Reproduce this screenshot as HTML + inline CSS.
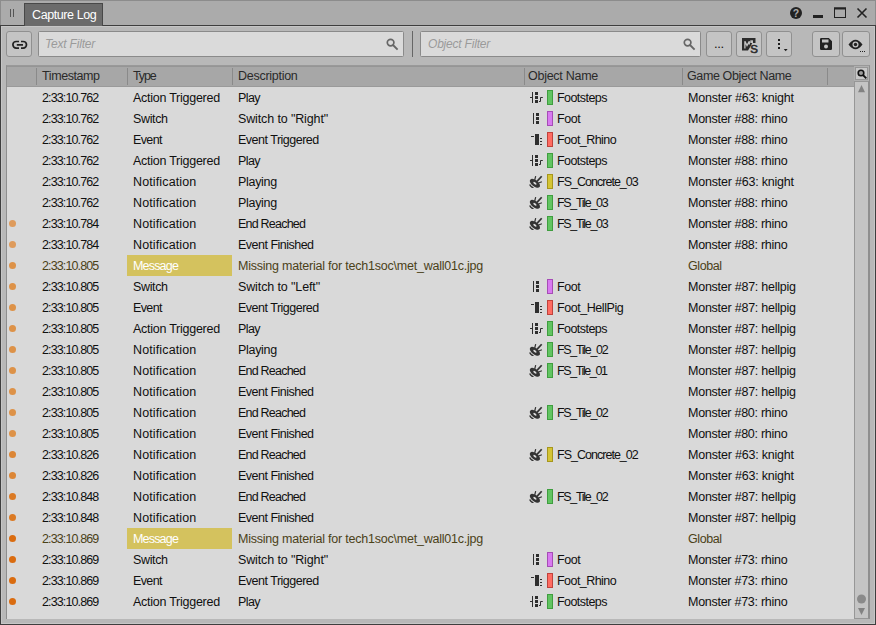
<!DOCTYPE html>
<html lang="en">
<head>
<meta charset="utf-8">
<title>Capture Log</title>
<style>
*{box-sizing:border-box;margin:0;padding:0}
html,body{width:876px;height:625px;overflow:hidden}
body{position:relative;background:#b8b8b8;font-family:"Liberation Sans",sans-serif;font-size:12.5px;color:#101010}
.abs{position:absolute}
#title{position:absolute;left:0;top:0;width:876px;height:25px;background:#ababab;border:1px solid #8c8c8c;border-bottom:none}
#frame{position:absolute;left:0;top:25px;width:876px;height:600px;border:1px solid #3e3e3e;box-shadow:inset 1px 1px 0 #c6c6c6,inset -1px -1px 0 #c6c6c6;pointer-events:none;z-index:10}
#tab{position:absolute;left:24px;top:3px;width:79px;height:23px;z-index:11;background:#6b6b6b;border:1px solid #484848;border-bottom:none;color:#fff;font-size:12.5px;letter-spacing:-0.4px;line-height:22px;padding-left:7px;white-space:nowrap}
#grip{position:absolute;left:10px;top:9px;width:4px;height:8px;border-left:1px solid #555;border-right:1px solid #555}
.btn{position:absolute;top:31px;height:26px;background:#c4c4c4;border:1px solid #909090;border-radius:3px}
.inp{position:absolute;top:31px;height:26px;background:#dadada;border:1px solid #8a8a8a;border-radius:1.500px;font-style:italic;color:#9a9a9a;font-size:12px;letter-spacing:-0.2px;line-height:25px;padding-left:6px}
#sep{position:absolute;left:412px;top:31px;width:1px;height:26px;background:#666}
#list{position:absolute;left:6px;top:65px;width:864px;height:554px;background:#d9d9d9;border:1px solid #8e8e8e;border-top-color:#999;border-bottom:none}
#hdr{position:absolute;left:0;top:0;width:847px;height:21px;background:#a7a7a7;border-top:1px solid #959595;border-bottom:1px solid #9a9a9a}
#hdr span{position:absolute;top:0;line-height:19px;color:#2a2a2a;white-space:nowrap}
#hdr i{position:absolute;top:1px;width:1px;height:17px;background:#8a8a8a}
#rows{position:absolute;left:0;top:21px;width:847px}
.row{position:relative;height:21px;width:847px}
.c{position:absolute;top:1px;line-height:21px;white-space:nowrap}
.ts{left:35px}.ty{left:126px}.de{left:231px}.on{left:550px}.go{left:681px}
.msg{color:#4b4118}
.msg .ty{left:120px;top:0;width:105px;height:21px;padding-left:6px;padding-top:1px;background:#d4c25e;color:#fff}
.ic{position:absolute;left:522px;top:3px}
.sw{position:absolute;left:540px;top:3px;width:6px;height:15px;border:1px solid}
.sw.g{background:#62c462;border-color:#3f9e3f}
.sw.p{background:#d87af0;border-color:#a64cb6}
.sw.r{background:#ff6c62;border-color:#c0423c}
.sw.y{background:#d4c435;border-color:#a6961c}
.dot{position:absolute;left:2px;top:7px;width:7px;height:7px;border-radius:50%}
.d1{background:#de9b5c}.d2{background:#dd9248}.d3{background:#dc8636}.d4{background:#db7a24}.d5{background:#da6c10}
#sb{position:absolute;left:847px;top:15px;width:15px;height:538px;background:#c4c4c4;border:1px solid #979797;border-right-color:#8e8e8e}
#sbtop{position:absolute;left:847px;top:0;width:15px;height:15px;background:#b0b0b0}
#find{position:absolute;left:848px;top:1px;width:13px;height:13px;background:#c8c8c8;border:1px solid #979797}
</style>
</head>
<body>
<svg width="0" height="0" style="position:absolute">
<defs>
<g id="i-sw" fill="#2e2e2e" stroke="none">
 <rect x="1" y="7" width="2" height="1"/><rect x="3" y="2" width="1" height="11"/>
 <rect x="6" y="2" width="3" height="3"/><rect x="6" y="6" width="3" height="3"/><rect x="6" y="10" width="3" height="3"/>
 <path d="M10 11.500h1.500v-4h2.300" fill="none" stroke="#2e2e2e" stroke-width="1"/>
</g>
<g id="i-sg" fill="#2e2e2e">
 <rect x="4" y="2" width="1" height="11"/>
 <rect x="7" y="2" width="3" height="3"/><rect x="7" y="6" width="3" height="3"/><rect x="7" y="10" width="3" height="3"/>
</g>
<g id="i-ev" fill="#2e2e2e">
 <rect x="2" y="4" width="3" height="1"/><rect x="6" y="2" width="4" height="11"/>
 <rect x="11" y="6" width="2" height="1"/><rect x="11" y="9" width="2" height="1"/><rect x="11" y="12" width="2" height="1"/>
</g>
<g id="i-sfx">
 <ellipse cx="5.900" cy="9.300" rx="5.900" ry="3.200" transform="rotate(38 5.900 9.300)" fill="#333"/>
 <ellipse cx="5.900" cy="9.300" rx="1.900" ry="0.900" transform="rotate(38 5.900 9.300)" fill="#dcdcdc"/>
 <path d="M0.700 10.600Q1.600 13 4.500 13.900" stroke="#333" stroke-width="1.400" fill="none"/>
 <path d="M8 7.400L12.700 2.200" stroke="#333" stroke-width="1.700" fill="none"/>
 <path d="M5.700 6L6.700 2.200M9.500 9L12.900 7.700" stroke="#333" stroke-width="1.200" fill="none"/>
</g>
</defs>
</svg>

<div id="title"></div>
<div id="grip"></div>
<div id="tab">Capture Log</div>

<!-- window buttons -->
<svg class="abs" style="left:788px;top:4px" width="84" height="18" viewBox="0 0 84 18">
 <circle cx="8" cy="9" r="6" fill="#222"/>
 <text x="8" y="13" text-anchor="middle" font-family="Liberation Sans" font-weight="bold" font-size="10.5" fill="#ababab">?</text>
 <rect x="25" y="11" width="10" height="3" fill="#222"/>
 <rect x="46.5" y="4" width="11" height="9.5" fill="none" stroke="#222" stroke-width="1"/><rect x="46" y="3.5" width="12" height="2" fill="#222"/>
 <path d="M69.5 4.5L78.5 13.5M78.5 4.5L69.5 13.5" stroke="#222" stroke-width="1.6" fill="none"/>
</svg>

<!-- toolbar -->
<div class="btn" style="left:6px;width:26px">
 <svg class="abs" style="left:5px;top:6px" width="16" height="14" viewBox="0 0 16 14"><path d="M7 3.5H4.2a3.3 3.3 0 0 0 0 6.6H7M9 3.5h2.2a3.3 3.3 0 0 1 0 6.6H9M4.800 6.800h6.200" fill="none" stroke="#222" stroke-width="1.7"/></svg>
</div>
<div class="inp" style="left:38px;width:366px">Text Filter
 <svg class="abs" style="right:4.5px;top:5.500px" width="13" height="13" viewBox="0 0 13 13"><circle cx="4.6" cy="4.6" r="3.3" fill="none" stroke="#666" stroke-width="1.7"/><path d="M7 7l4.6 4.6" stroke="#666" stroke-width="1.9"/></svg>
</div>
<div id="sep"></div>
<div class="inp" style="left:420px;width:281px;padding-left:7px">Object Filter
 <svg class="abs" style="right:4.5px;top:5.500px" width="13" height="13" viewBox="0 0 13 13"><circle cx="4.6" cy="4.6" r="3.3" fill="none" stroke="#666" stroke-width="1.7"/><path d="M7 7l4.6 4.6" stroke="#666" stroke-width="1.9"/></svg>
</div>
<div class="btn" style="left:706px;width:26px"><span class="abs" style="left:7px;top:5px;font-size:13px;line-height:14px;color:#111;letter-spacing:-0.4px">...</span></div>
<div class="btn" style="left:736px;width:26px">
 <svg class="abs" style="left:4px;top:5px" width="19" height="18" viewBox="0 0 19 18"><path d="M1 1h13.500v5h-3.300l-1.200 2.600l-3 4.900h-6z" fill="#2c2c2c"/><path d="M3.900 11.500V4.200L6 8.500L8.300 4.200V7.500" stroke="#c4c4c4" stroke-width="1.300" fill="none"/><rect x="9.300" y="3.300" width="2.700" height="2.700" fill="#c4c4c4"/><text x="9.200" y="15.500" font-family="Liberation Sans" font-size="11.500" fill="#2c2c2c" stroke="#2c2c2c" stroke-width="0.600">S</text></svg>
</div>
<div class="btn" style="left:766px;width:26px">
 <svg class="abs" style="left:8px;top:6px" width="16" height="16" viewBox="0 0 16 16"><rect x="3" y="1" width="2" height="2" fill="#1c1c1c"/><rect x="3" y="5" width="2" height="2" fill="#1c1c1c"/><rect x="3" y="9" width="2" height="2" fill="#1c1c1c"/><path d="M8.800 11h3.800l-1.900 2.200z" fill="#1c1c1c"/></svg>
</div>
<div class="btn" style="left:812px;width:28px">
 <svg class="abs" style="left:6px;top:5px" width="14" height="14" viewBox="0 0 14 14"><path d="M1 2.2A1.2 1.2 0 0 1 2.2 1h7.6L13 4.2v7.6A1.2 1.2 0 0 1 11.800 13H2.2A1.2 1.2 0 0 1 1 11.800z" fill="#222"/><rect x="3" y="2.5" width="6.5" height="3" fill="#c3c3c3"/><circle cx="7" cy="9.500" r="2" fill="#c3c3c3"/></svg>
</div>
<div class="btn" style="left:842px;width:28px">
 <svg class="abs" style="left:4px;top:5px" width="20" height="17" viewBox="0 0 20 17"><path d="M1.5 7.500Q8.500 -2 15.5 7.500Q8.500 17 1.5 7.500z" fill="#222"/><circle cx="8.500" cy="7.500" r="3" fill="#c3c3c3"/><circle cx="8.500" cy="7.500" r="1.700" fill="#222"/><rect x="13" y="14" width="1" height="1" fill="#222"/><rect x="15" y="14" width="1" height="1" fill="#222"/><rect x="17" y="14" width="1" height="1" fill="#222"/></svg>
</div>

<!-- list -->
<div id="list">
 <div id="hdr">
  <i style="left:29px"></i><i style="left:120px"></i><i style="left:225px"></i><i style="left:517px"></i><i style="left:675px"></i><i style="left:820px"></i>
  <span style="left:35px;letter-spacing:-0.41px">Timestamp</span><span style="left:126px;letter-spacing:-1.10px">Type</span><span style="left:231px;letter-spacing:-0.27px">Description</span><span style="left:521px;letter-spacing:-0.27px">Object Name</span><span style="left:680px;letter-spacing:-0.38px">Game Object Name</span>
 </div>
 <div id="rows">
<div class="row"><span class="c ts" style="letter-spacing:-0.88px">2:33:10.762</span><span class="c ty" style="letter-spacing:-0.26px">Action Triggered</span><span class="c de" style="letter-spacing:-0.58px">Play</span><svg class="ic" width="14" height="14" viewBox="0 0 14 14"><use href="#i-sw"/></svg><i class="sw g"></i><span class="c on" style="letter-spacing:-0.56px">Footsteps</span><span class="c go" style="letter-spacing:-0.21px">Monster #63: knight</span></div>
<div class="row"><span class="c ts" style="letter-spacing:-0.88px">2:33:10.762</span><span class="c ty" style="letter-spacing:-0.35px">Switch</span><span class="c de" style="letter-spacing:-0.13px">Switch to &quot;Right&quot;</span><svg class="ic" width="14" height="14" viewBox="0 0 14 14"><use href="#i-sg"/></svg><i class="sw p"></i><span class="c on" style="letter-spacing:-0.41px">Foot</span><span class="c go" style="letter-spacing:-0.27px">Monster #88: rhino</span></div>
<div class="row"><span class="c ts" style="letter-spacing:-0.88px">2:33:10.762</span><span class="c ty" style="letter-spacing:-0.62px">Event</span><span class="c de" style="letter-spacing:-0.50px">Event Triggered</span><svg class="ic" width="14" height="14" viewBox="0 0 14 14"><use href="#i-ev"/></svg><i class="sw r"></i><span class="c on" style="letter-spacing:-0.55px">Foot_Rhino</span><span class="c go" style="letter-spacing:-0.27px">Monster #88: rhino</span></div>
<div class="row"><span class="c ts" style="letter-spacing:-0.88px">2:33:10.762</span><span class="c ty" style="letter-spacing:-0.26px">Action Triggered</span><span class="c de" style="letter-spacing:-0.58px">Play</span><svg class="ic" width="14" height="14" viewBox="0 0 14 14"><use href="#i-sw"/></svg><i class="sw g"></i><span class="c on" style="letter-spacing:-0.56px">Footsteps</span><span class="c go" style="letter-spacing:-0.27px">Monster #88: rhino</span></div>
<div class="row"><span class="c ts" style="letter-spacing:-0.88px">2:33:10.762</span><span class="c ty" style="letter-spacing:0.13px">Notification</span><span class="c de" style="letter-spacing:-0.30px">Playing</span><svg class="ic" width="14" height="14" viewBox="0 0 14 14"><use href="#i-sfx"/></svg><i class="sw y"></i><span class="c on" style="letter-spacing:-0.98px">FS_Concrete_03</span><span class="c go" style="letter-spacing:-0.21px">Monster #63: knight</span></div>
<div class="row"><span class="c ts" style="letter-spacing:-0.88px">2:33:10.762</span><span class="c ty" style="letter-spacing:0.13px">Notification</span><span class="c de" style="letter-spacing:-0.30px">Playing</span><svg class="ic" width="14" height="14" viewBox="0 0 14 14"><use href="#i-sfx"/></svg><i class="sw g"></i><span class="c on" style="letter-spacing:-1.31px">FS_Tile_03</span><span class="c go" style="letter-spacing:-0.27px">Monster #88: rhino</span></div>
<div class="row"><i class="dot d1"></i><span class="c ts" style="letter-spacing:-0.88px">2:33:10.784</span><span class="c ty" style="letter-spacing:0.13px">Notification</span><span class="c de" style="letter-spacing:-0.78px">End Reached</span><svg class="ic" width="14" height="14" viewBox="0 0 14 14"><use href="#i-sfx"/></svg><i class="sw g"></i><span class="c on" style="letter-spacing:-1.31px">FS_Tile_03</span><span class="c go" style="letter-spacing:-0.27px">Monster #88: rhino</span></div>
<div class="row"><i class="dot d1"></i><span class="c ts" style="letter-spacing:-0.88px">2:33:10.784</span><span class="c ty" style="letter-spacing:0.13px">Notification</span><span class="c de" style="letter-spacing:-0.51px">Event Finished</span><span class="c go" style="letter-spacing:-0.27px">Monster #88: rhino</span></div>
<div class="row msg"><i class="dot d2"></i><span class="c ts" style="letter-spacing:-0.88px">2:33:10.805</span><span class="c ty" style="letter-spacing:-0.81px">Message</span><span class="c de" style="letter-spacing:-0.22px">Missing material for tech1soc\met_wall01c.jpg</span><span class="c go" style="letter-spacing:-0.41px">Global</span></div>
<div class="row"><i class="dot d2"></i><span class="c ts" style="letter-spacing:-0.88px">2:33:10.805</span><span class="c ty" style="letter-spacing:-0.35px">Switch</span><span class="c de" style="letter-spacing:-0.12px">Switch to &quot;Left&quot;</span><svg class="ic" width="14" height="14" viewBox="0 0 14 14"><use href="#i-sg"/></svg><i class="sw p"></i><span class="c on" style="letter-spacing:-0.41px">Foot</span><span class="c go" style="letter-spacing:-0.24px">Monster #87: hellpig</span></div>
<div class="row"><i class="dot d2"></i><span class="c ts" style="letter-spacing:-0.88px">2:33:10.805</span><span class="c ty" style="letter-spacing:-0.62px">Event</span><span class="c de" style="letter-spacing:-0.50px">Event Triggered</span><svg class="ic" width="14" height="14" viewBox="0 0 14 14"><use href="#i-ev"/></svg><i class="sw r"></i><span class="c on" style="letter-spacing:-0.44px">Foot_HellPig</span><span class="c go" style="letter-spacing:-0.24px">Monster #87: hellpig</span></div>
<div class="row"><i class="dot d2"></i><span class="c ts" style="letter-spacing:-0.88px">2:33:10.805</span><span class="c ty" style="letter-spacing:-0.26px">Action Triggered</span><span class="c de" style="letter-spacing:-0.58px">Play</span><svg class="ic" width="14" height="14" viewBox="0 0 14 14"><use href="#i-sw"/></svg><i class="sw g"></i><span class="c on" style="letter-spacing:-0.56px">Footsteps</span><span class="c go" style="letter-spacing:-0.24px">Monster #87: hellpig</span></div>
<div class="row"><i class="dot d2"></i><span class="c ts" style="letter-spacing:-0.88px">2:33:10.805</span><span class="c ty" style="letter-spacing:0.13px">Notification</span><span class="c de" style="letter-spacing:-0.30px">Playing</span><svg class="ic" width="14" height="14" viewBox="0 0 14 14"><use href="#i-sfx"/></svg><i class="sw g"></i><span class="c on" style="letter-spacing:-1.31px">FS_Tile_02</span><span class="c go" style="letter-spacing:-0.24px">Monster #87: hellpig</span></div>
<div class="row"><i class="dot d2"></i><span class="c ts" style="letter-spacing:-0.88px">2:33:10.805</span><span class="c ty" style="letter-spacing:0.13px">Notification</span><span class="c de" style="letter-spacing:-0.78px">End Reached</span><svg class="ic" width="14" height="14" viewBox="0 0 14 14"><use href="#i-sfx"/></svg><i class="sw g"></i><span class="c on" style="letter-spacing:-1.39px">FS_Tile_01</span><span class="c go" style="letter-spacing:-0.24px">Monster #87: hellpig</span></div>
<div class="row"><i class="dot d2"></i><span class="c ts" style="letter-spacing:-0.88px">2:33:10.805</span><span class="c ty" style="letter-spacing:0.13px">Notification</span><span class="c de" style="letter-spacing:-0.51px">Event Finished</span><span class="c go" style="letter-spacing:-0.24px">Monster #87: hellpig</span></div>
<div class="row"><i class="dot d2"></i><span class="c ts" style="letter-spacing:-0.88px">2:33:10.805</span><span class="c ty" style="letter-spacing:0.13px">Notification</span><span class="c de" style="letter-spacing:-0.78px">End Reached</span><svg class="ic" width="14" height="14" viewBox="0 0 14 14"><use href="#i-sfx"/></svg><i class="sw g"></i><span class="c on" style="letter-spacing:-1.31px">FS_Tile_02</span><span class="c go" style="letter-spacing:-0.27px">Monster #80: rhino</span></div>
<div class="row"><i class="dot d2"></i><span class="c ts" style="letter-spacing:-0.88px">2:33:10.805</span><span class="c ty" style="letter-spacing:0.13px">Notification</span><span class="c de" style="letter-spacing:-0.51px">Event Finished</span><span class="c go" style="letter-spacing:-0.27px">Monster #80: rhino</span></div>
<div class="row"><i class="dot d3"></i><span class="c ts" style="letter-spacing:-0.88px">2:33:10.826</span><span class="c ty" style="letter-spacing:0.13px">Notification</span><span class="c de" style="letter-spacing:-0.78px">End Reached</span><svg class="ic" width="14" height="14" viewBox="0 0 14 14"><use href="#i-sfx"/></svg><i class="sw y"></i><span class="c on" style="letter-spacing:-0.98px">FS_Concrete_02</span><span class="c go" style="letter-spacing:-0.21px">Monster #63: knight</span></div>
<div class="row"><i class="dot d3"></i><span class="c ts" style="letter-spacing:-0.88px">2:33:10.826</span><span class="c ty" style="letter-spacing:0.13px">Notification</span><span class="c de" style="letter-spacing:-0.51px">Event Finished</span><span class="c go" style="letter-spacing:-0.21px">Monster #63: knight</span></div>
<div class="row"><i class="dot d4"></i><span class="c ts" style="letter-spacing:-0.88px">2:33:10.848</span><span class="c ty" style="letter-spacing:0.13px">Notification</span><span class="c de" style="letter-spacing:-0.78px">End Reached</span><svg class="ic" width="14" height="14" viewBox="0 0 14 14"><use href="#i-sfx"/></svg><i class="sw g"></i><span class="c on" style="letter-spacing:-1.31px">FS_Tile_02</span><span class="c go" style="letter-spacing:-0.24px">Monster #87: hellpig</span></div>
<div class="row"><i class="dot d4"></i><span class="c ts" style="letter-spacing:-0.88px">2:33:10.848</span><span class="c ty" style="letter-spacing:0.13px">Notification</span><span class="c de" style="letter-spacing:-0.51px">Event Finished</span><span class="c go" style="letter-spacing:-0.24px">Monster #87: hellpig</span></div>
<div class="row msg"><i class="dot d5"></i><span class="c ts" style="letter-spacing:-0.88px">2:33:10.869</span><span class="c ty" style="letter-spacing:-0.81px">Message</span><span class="c de" style="letter-spacing:-0.22px">Missing material for tech1soc\met_wall01c.jpg</span><span class="c go" style="letter-spacing:-0.41px">Global</span></div>
<div class="row"><i class="dot d5"></i><span class="c ts" style="letter-spacing:-0.88px">2:33:10.869</span><span class="c ty" style="letter-spacing:-0.35px">Switch</span><span class="c de" style="letter-spacing:-0.13px">Switch to &quot;Right&quot;</span><svg class="ic" width="14" height="14" viewBox="0 0 14 14"><use href="#i-sg"/></svg><i class="sw p"></i><span class="c on" style="letter-spacing:-0.41px">Foot</span><span class="c go" style="letter-spacing:-0.27px">Monster #73: rhino</span></div>
<div class="row"><i class="dot d5"></i><span class="c ts" style="letter-spacing:-0.88px">2:33:10.869</span><span class="c ty" style="letter-spacing:-0.62px">Event</span><span class="c de" style="letter-spacing:-0.50px">Event Triggered</span><svg class="ic" width="14" height="14" viewBox="0 0 14 14"><use href="#i-ev"/></svg><i class="sw r"></i><span class="c on" style="letter-spacing:-0.55px">Foot_Rhino</span><span class="c go" style="letter-spacing:-0.27px">Monster #73: rhino</span></div>
<div class="row"><i class="dot d5"></i><span class="c ts" style="letter-spacing:-0.88px">2:33:10.869</span><span class="c ty" style="letter-spacing:-0.26px">Action Triggered</span><span class="c de" style="letter-spacing:-0.58px">Play</span><svg class="ic" width="14" height="14" viewBox="0 0 14 14"><use href="#i-sw"/></svg><i class="sw g"></i><span class="c on" style="letter-spacing:-0.56px">Footsteps</span><span class="c go" style="letter-spacing:-0.27px">Monster #73: rhino</span></div>

 </div>
 <div id="sb">
  <svg class="abs" style="left:-1px;top:-1px" width="15" height="536" viewBox="0 0 15 536"><path d="M4 11.200h7l-3.500-7.200z" fill="#828282"/><circle cx="7.500" cy="518" r="4.500" fill="#8a8a8a"/><path d="M4 527h7l-3.500 7z" fill="#828282"/></svg>
 </div>
 <div id="sbtop"></div>
 <div id="find"><svg class="abs" style="left:1px;top:1px" width="10" height="10" viewBox="0 0 10 10"><circle cx="4" cy="4" r="2.800" fill="#9c9c9c" stroke="#111" stroke-width="1.600"/><path d="M6 6l3.300 3.300" stroke="#111" stroke-width="1.800"/></svg></div>
</div>
<div id="frame"></div>
</body>
</html>
